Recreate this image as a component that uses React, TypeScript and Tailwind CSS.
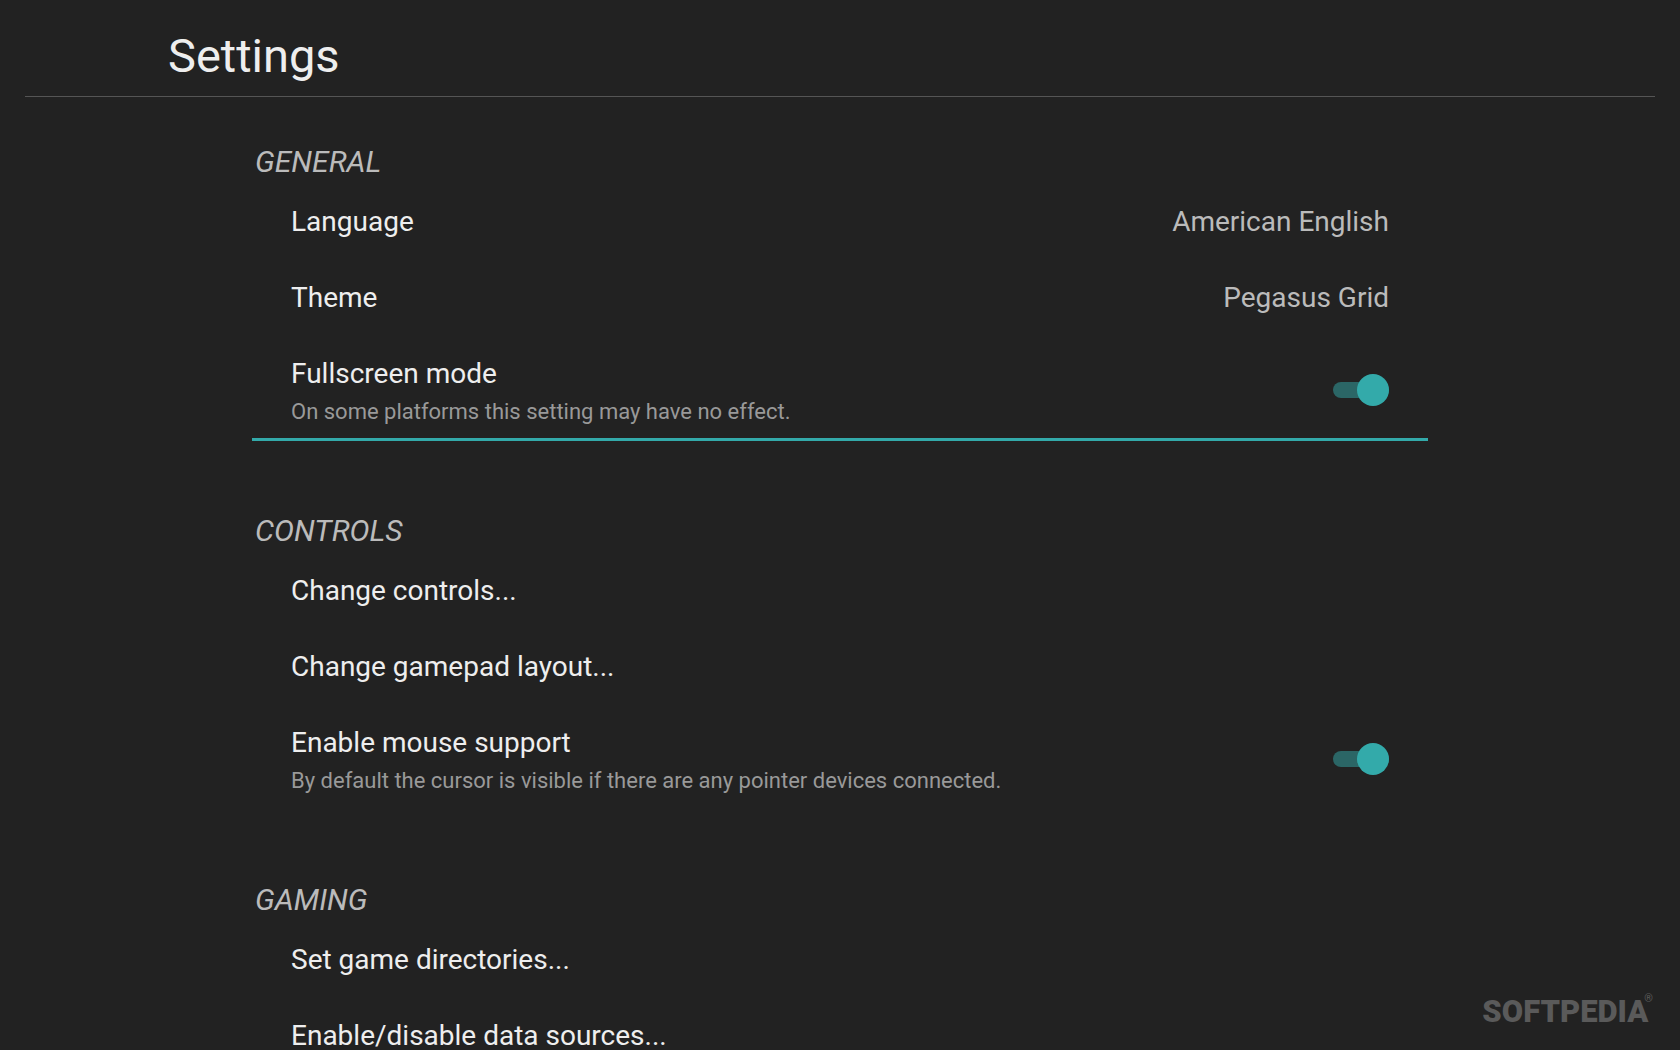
import React, { useState } from 'react';
import clsx from 'clsx';

type Item = {
  label: string;
  value?: string;
  note?: string;
  toggle?: boolean;
};

type Group = {
  title: string;
  items: Item[];
};

const groups: Group[] = [
  {
    title: 'General',
    items: [
      { label: 'Language', value: 'American English' },
      { label: 'Theme', value: 'Pegasus Grid' },
      {
        label: 'Fullscreen mode',
        note: 'On some platforms this setting may have no effect.',
        toggle: true,
      },
    ],
  },
  {
    title: 'Controls',
    items: [
      { label: 'Change controls...' },
      { label: 'Change gamepad layout...' },
      {
        label: 'Enable mouse support',
        note: 'By default the cursor is visible if there are any pointer devices connected.',
        toggle: true,
      },
    ],
  },
  {
    title: 'Gaming',
    items: [
      { label: 'Set game directories...' },
      { label: 'Enable/disable data sources...' },
    ],
  },
];

function ToggleRow({ item, selected, onSelect }: { item: Item; selected: boolean; onSelect: () => void }) {
  const [on, setOn] = useState(true);

  return (
    <label
      className={clsx(
        'flex items-start justify-between border-b-3 px-[39px] pt-[22px] pb-[13px]',
        selected ? 'border-[#33aaaa]' : 'border-transparent'
      )}
    >
      <span className="flex flex-col gap-[9px]">
        <span className="text-[28px] leading-[33px] text-[#eeeeee]">{item.label}</span>
        <span className="text-[22px] leading-[26px] text-[#999999]">{item.note}</span>
      </span>

      {/* Switch */}
      <input
        type="checkbox"
        role="switch"
        checked={on}
        onFocus={onSelect}
        onChange={() => setOn(!on)}
        className="relative mt-[17px] h-8 w-14 shrink-0 appearance-none outline-none before:absolute before:top-2 before:left-0 before:h-4 before:w-full before:rounded-full before:bg-[#666666] after:absolute after:top-0 after:left-0 after:size-8 after:rounded-full after:bg-[#999999] checked:before:bg-[#2b6666] checked:after:left-6 checked:after:bg-[#33aaaa]"
      />
    </label>
  );
}

function ButtonRow({ item, selected, onSelect }: { item: Item; selected: boolean; onSelect: () => void }) {
  return (
    <button
      type="button"
      onFocus={onSelect}
      className={clsx(
        'flex w-full items-start justify-between border-b-3 px-[39px] pt-[22px] pb-[18px] text-[28px] leading-[33px] outline-none',
        selected ? 'border-[#33aaaa]' : 'border-transparent'
      )}
    >
      <span className="text-[#eeeeee]">{item.label}</span>
      {item.value && <span className="text-[#bbbbbb]">{item.value}</span>}
    </button>
  );
}

export default function App() {
  const [selected, setSelected] = useState('Fullscreen mode');

  return (
    <div className="relative flex h-screen flex-col overflow-hidden bg-[#222222] font-[Roboto,sans-serif]">
      {/* Header */}
      <header className="mx-[25px] border-b border-[#555555] pt-7 pb-3">
        <h1 className="pl-[143px] text-[47px] leading-[56px] text-[#eeeeee]">Settings</h1>
      </header>

      {/* Settings list */}
      <main className="mx-auto w-[70%] min-h-0 flex-1 overflow-hidden pt-[47px]">
        {groups.map((group) => (
          <section key={group.title} className="mb-[72px]">
            <h2 className="mb-1 pl-[3px] text-[30px] leading-[35px] text-[#bbbbbb] italic uppercase">
              {group.title}
            </h2>
            {group.items.map((item) => {
              const Row = item.toggle ? ToggleRow : ButtonRow;
              return (
                <Row
                  key={item.label}
                  item={item}
                  selected={selected === item.label}
                  onSelect={() => setSelected(item.label)}
                />
              );
            })}
          </section>
        ))}
      </main>

      {/* Watermark */}
      <div className="absolute right-[27px] bottom-[19px] flex items-start text-[#5a5a5a]">
        <span className="text-[31px] leading-[38px] font-black">SOFTPEDIA</span>
        <span className="-ml-1 text-[11px] leading-[12px]">®</span>
      </div>
    </div>
  );
}
